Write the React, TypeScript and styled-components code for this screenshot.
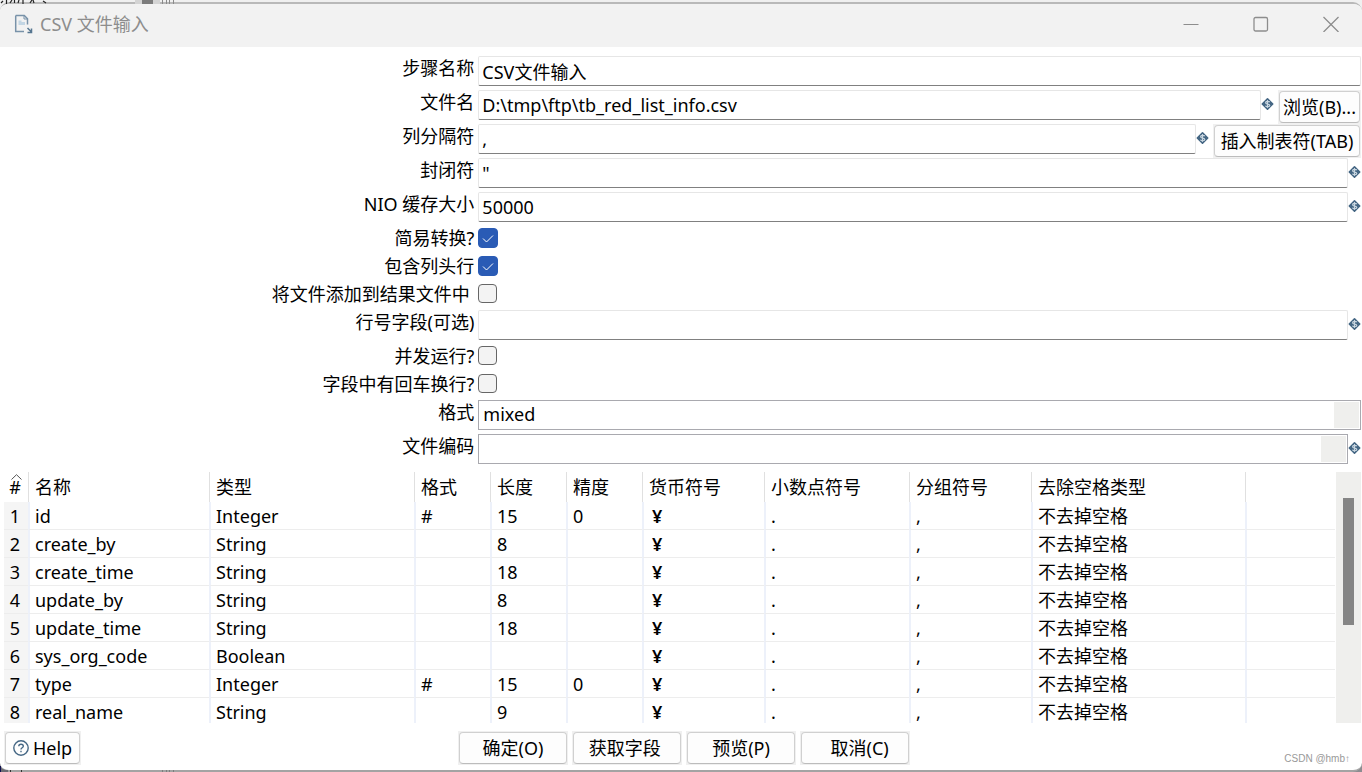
import React from "react";
import styled, { createGlobalStyle } from "styled-components";

const GlobalStyle = createGlobalStyle`
  * { box-sizing: border-box; }
  body {
    margin: 0;
    background: #e9e9e9;
    color: #000;
    font: 18px/26px "Noto Sans", "Noto Sans CJK SC", sans-serif;
  }
  button, input, select { font: inherit; color: inherit; }
`;

const Backdrop = styled.div`
  position: relative;
  height: 100vh;
  min-height: 640px;
  padding-top: 2px;
  background: linear-gradient(#f0f0f0, #f0f0f0 50%, #8c8c90);
`;

const BehindTop = styled.svg`
  position: absolute;
  top: 0;
  left: 0;
`;

const BehindBottom = styled.svg`
  position: absolute;
  bottom: 0;
  left: 0;
`;

const Dialog = styled.main`
  display: flex;
  flex-direction: column;
  height: 100%;
  overflow: hidden;
  background: #fff;
  border-top: 2px solid #b9b9b9;
  border-bottom: 2px solid #a3a3a3;
  border-radius: 9px;
`;

const TitleBar = styled.header`
  display: flex;
  align-items: center;
  flex: none;
  height: 43px;
  padding: 0 0 3px 14px;
  background: #f2f2f2;
  color: #8d8d8d;
`;

const Title = styled.h1`
  flex: 1;
  margin: 0 0 0 6px;
  font-size: 18px;
  font-weight: 400;
`;

const WindowButton = styled.button`
  display: grid;
  place-items: center;
  width: 70px;
  height: 40px;
  padding: 0;
  border: 0;
  background: none;
  color: #8d8d8d;
  &:last-child { width: 66px; padding-left: 4px; }
`;

const Form = styled.form`
  flex: none;
  padding: 9px 1px 4px 0;
`;

const Row = styled.div<{ $compact?: boolean }>`
  display: flex;
  align-items: flex-start;
  height: ${(p) => (p.$compact ? 28 : 34)}px;
`;

const Label = styled.label`
  flex: none;
  width: 35%;
  padding-right: 2px;
  line-height: 24px;
  text-align: right;
  white-space: pre;
`;

const Field = styled.div`
  display: flex;
  flex: 1;
  min-width: 0;
  margin-left: 2px;
`;

const TextInput = styled.input`
  flex: 1;
  min-width: 0;
  height: 30px;
  padding: 0 3px;
  border: 1px solid #e6e6e6;
  border-bottom-color: #808080;
  border-radius: 2px;
  background: #fff;
  outline: 0;
`;

const Select = styled.select`
  appearance: none;
  flex: 1;
  min-width: 0;
  height: 30px;
  padding: 0 4px 2px;
  border: 1px solid #a9a9af;
  border-radius: 0;
  background: linear-gradient(#efefed, #efefed) no-repeat right 1px top 1px / 25px 26px #fff;
  outline: 0;
`;

const CheckBox = styled.span`
  display: grid;
  justify-items: start;
  margin-top: 2px;
  > * { grid-area: 1 / 1; }
`;

const CheckInput = styled.input`
  appearance: none;
  width: 19px;
  height: 19px;
  margin: 0;
  border: 1px solid #666;
  border-radius: 4px;
  background: #f3f3f3;
  &:checked {
    width: 20px;
    height: 20px;
    border-color: #2a5bb5;
    background: #2a5bb5;
  }
`;

const Tick = styled.svg`
  pointer-events: none;
`;

const VariableMark = styled.svg`
  flex: none;
  margin-top: 7px;
`;

const ButtonFrame = styled.span<{ $width: number; $after?: boolean }>`
  display: inline-flex;
  flex: none;
  height: 34px;
  width: ${(p) => p.$width}px;
  margin-left: ${(p) => (p.$after ? 4 : 0)}px;
  padding: 1px;
  background: #f0f0f0;
`;

const Button = styled.button`
  display: flex;
  align-items: center;
  justify-content: center;
  flex: 1;
  gap: 4px;
  padding: 0;
  border: 1px solid #d0d0d0;
  border-bottom-color: #bcbcbc;
  border-radius: 4px;
  background: #fdfdfd;
  white-space: pre;
`;

const TableArea = styled.section`
  display: flex;
  flex: 1;
  min-height: 0;
  padding: 0 1px 0 4px;
`;

const TableView = styled.div`
  flex: 1;
  min-width: 0;
  overflow: hidden;
`;

const Table = styled.table`
  width: 100%;
  table-layout: fixed;
  border-spacing: 0;
`;

const Col = styled.col<{ $w?: number }>`
  width: ${(p) => (p.$w ? `${p.$w}px` : "auto")};
`;

const HeadCell = styled.th`
  height: 30px;
  padding: 0 0 0 6px;
  border-left: 1px solid #e0e0e0;
  font-weight: 400;
  text-align: left;
  white-space: nowrap;
  &:first-child { padding: 0 2px 0 0; border: 0; text-align: center; }
`;

const SortMark = styled.svg`
  display: block;
  margin: 0 0 -6px 7px;
`;

const Cell = styled.td`
  height: 28px;
  padding: 0 0 0 5px;
  border-left: 2px solid #edf1fa;
  border-bottom: 1px solid #ededed;
  white-space: nowrap;
  &:first-child {
    padding: 0 2px 0 0;
    border-left: 0;
    background: #f5f5f5;
    text-align: center;
  }
`;

const CurrencyCell = styled(Cell)`
  padding-left: 8px;
  font-weight: 600;
`;

const ScrollTrack = styled.div`
  flex: none;
  width: 25px;
  margin-left: 1px;
  padding: 26px 7px 0;
  background: #efefed;
`;

const ScrollThumb = styled.div`
  height: 127px;
  background: #858585;
`;

const Footer = styled.footer`
  display: grid;
  grid-template-columns: 1fr auto 1fr;
  flex: none;
  padding: 8px 0 5px 4px;
`;

const Actions = styled.div`
  display: flex;
  gap: 4px;
  padding-left: 2px;
`;

const Watermark = styled.small`
  align-self: end;
  justify-self: end;
  margin-right: 12px;
  color: #999;
  font: 10px/12px "Liberation Sans", "Noto Sans CJK SC", sans-serif;
`;

const Variable = () => (
  <VariableMark width="13" height="14" viewBox="0 0 13 14" aria-hidden="true">
    <path d="M6.500 1.800 11.700 7 6.500 12.200 1.300 7Z" fill="#456784" stroke="#456784" strokeWidth="1.600" strokeLinejoin="round" />
    <path d="M8.800 5.200C8 4 4.600 4 4.600 5.700c0 1.700 4.200 1 4.200 2.800 0 1.700-3.600 1.600-4.400.3M6.500 3v8" fill="none" stroke="#c9d6e0" strokeWidth="1.200" />
  </VariableMark>
);

type TextRowProps = {
  id: string;
  label: string;
  value: string;
  variable?: boolean;
  action?: string;
  actionWidth?: number;
};

const TextRow = ({ id, label, value, variable, action, actionWidth = 110 }: TextRowProps) => (
  <Row>
    <Label htmlFor={id}>{label}</Label>
    <Field>
      <TextInput id={id} defaultValue={value} />
      {variable && <Variable />}
      {action && (
        <ButtonFrame $width={actionWidth} $after>
          <Button type="button">{action}</Button>
        </ButtonFrame>
      )}
    </Field>
  </Row>
);

const CheckRow = ({ id, label, checked }: { id: string; label: string; checked?: boolean }) => (
  <Row $compact>
    <Label htmlFor={id}>{label}</Label>
    <Field>
      <CheckBox>
        <CheckInput type="checkbox" id={id} defaultChecked={checked} />
        {checked && (
          <Tick width="20" height="20" viewBox="0 0 20 20" aria-hidden="true">
            <path d="M5 10.5 8.5 14 15 7.5" fill="none" stroke="#fff" strokeWidth="1" />
          </Tick>
        )}
      </CheckBox>
    </Field>
  </Row>
);

const SelectRow = ({ id, label, value, variable }: TextRowProps) => (
  <Row>
    <Label htmlFor={id}>{label}</Label>
    <Field>
      <Select id={id} defaultValue={value}>
        <option>{value}</option>
      </Select>
      {variable && <Variable />}
    </Field>
  </Row>
);

const widths = [24, 181, 205, 76, 76, 76, 122, 145, 122, 214, 0];
const headings = ["名称", "类型", "格式", "长度", "精度", "货币符号", "小数点符号", "分组符号", "去除空格类型", ""];
const fields = [
  ["id", "Integer", "#", "15", "0"],
  ["create_by", "String", "", "8", ""],
  ["create_time", "String", "", "18", ""],
  ["update_by", "String", "", "8", ""],
  ["update_time", "String", "", "18", ""],
  ["sys_org_code", "Boolean", "", "", ""],
  ["type", "Integer", "#", "15", "0"],
  ["real_name", "String", "", "9", ""],
];
const actions = ["确定(O)", "获取字段 ", "预览(P)", "  取消(C)"];

export default function App() {
  return (
    <Backdrop>
      <GlobalStyle />
      <Dialog>
        <TitleBar>
          <svg width="20" height="20" viewBox="0 0 20 20" fill="none" aria-hidden="true">
            <path d="M1.700 1.500h8.600l3.200 3.200v5.800M10 17.500H1.700v-16" stroke="#7892a9" strokeWidth="1.500" />
            <path d="M10 1.500v3.500h3.500" stroke="#7892a9" />
            <path d="M4.500 6.500h3v1.500h3.500v3h-6.500z" fill="#c3d6e4" />
            <path d="m13.500 14 4 4M17.500 14.500v4h-4" stroke="#567690" strokeWidth="1.500" />
          </svg>
          <Title>CSV 文件输入</Title>
          <WindowButton aria-label="最小化">
            <svg width="16" height="16" viewBox="0 0 16 16"><path d="M.5 8.500h15" stroke="currentColor" /></svg>
          </WindowButton>
          <WindowButton aria-label="最大化">
            <svg width="16" height="16" viewBox="0 0 16 16"><rect x="1" y="1.500" width="13.500" height="13.500" rx="1.500" fill="none" stroke="currentColor" strokeWidth="1.300" /></svg>
          </WindowButton>
          <WindowButton aria-label="关闭">
            <svg width="16" height="16" viewBox="0 0 16 16"><path d="m.5 1 15 15M15.500 1l-15 15" stroke="currentColor" strokeWidth="1.300" /></svg>
          </WindowButton>
        </TitleBar>

        <Form>
          <TextRow id="step" label="步骤名称" value="CSV文件输入" />
          <TextRow id="file" label="文件名" value="D:\tmp\ftp\tb_red_list_info.csv" variable action="浏览(B)..." actionWidth={83} />
          <TextRow id="delimiter" label="列分隔符" value="," variable action="插入制表符(TAB)" actionWidth={148} />
          <TextRow id="enclosure" label="封闭符" value={'"'} variable />
          <TextRow id="buffer" label="NIO 缓存大小" value="50000" variable />
          <CheckRow id="lazy" label="简易转换?" checked />
          <CheckRow id="header" label="包含列头行" checked />
          <CheckRow id="result" label="将文件添加到结果文件中 " />
          <TextRow id="rownum" label="行号字段(可选)" value="" variable />
          <CheckRow id="parallel" label="并发运行?" />
          <CheckRow id="newline" label="字段中有回车换行?" />
          <SelectRow id="format" label="格式" value="mixed" />
          <SelectRow id="encoding" label="文件编码" value="" variable />
        </Form>

        <TableArea>
          <TableView>
            <Table>
              <colgroup>
                {widths.map((w, i) => <Col key={i} $w={w} />)}
              </colgroup>
              <thead>
                <tr>
                  <HeadCell>
                    <SortMark width="11" height="6" viewBox="0 0 11 6" aria-hidden="true">
                      <path d="M.5 5.500 5.500 .7l5 4.800" fill="none" stroke="#555" />
                    </SortMark>
                    #
                  </HeadCell>
                  {headings.map((h, i) => <HeadCell key={i}>{h}</HeadCell>)}
                </tr>
              </thead>
              <tbody>
                {fields.map((f, i) => (
                  <tr key={f[0]}>
                    {[String(i + 1), ...f].map((v, j) => <Cell key={j}>{v}</Cell>)}
                    <CurrencyCell>¥</CurrencyCell>
                    <Cell>.</Cell>
                    <Cell>,</Cell>
                    <Cell>不去掉空格</Cell>
                    <Cell />
                  </tr>
                ))}
              </tbody>
            </Table>
          </TableView>
          <ScrollTrack>
            <ScrollThumb />
          </ScrollTrack>
        </TableArea>

        <Footer>
          <div>
            <ButtonFrame $width={77}>
              <Button type="button">
                <svg width="16" height="16" viewBox="0 0 16 16" fill="none" stroke="#456784" aria-hidden="true">
                  <circle cx="8" cy="8" r="7.200" strokeWidth="1.400" />
                  <path d="M5.800 6.300C5.800 3.500 10.300 3.600 10.300 6.200 10.300 7.800 8 7.700 8 9.500M8 10.800v1.400" strokeWidth="1.400" />
                </svg>
                Help
              </Button>
            </ButtonFrame>
          </div>
          <Actions>
            {actions.map((a) => (
              <ButtonFrame key={a} $width={110}>
                <Button type="button">{a}</Button>
              </ButtonFrame>
            ))}
          </Actions>
          <Watermark>CSDN @hmb↑</Watermark>
        </Footer>
      </Dialog>
      <BehindTop width="180" height="4" viewBox="0 0 180 4" aria-hidden="true">
        <path d="M135 0h7v4h-7zM153 0h7v4h-7z" fill="#d4d4d4" />
        <path d="M142 0h11v4h-11z" fill="#7c7c7c" />
        <path d="M162.500 0v4M166.500 0v4M169.500 0v4M173.500 0v4" stroke="#8a8a8a" />
        <path d="M1 3 3 1M6.500 0v4M10 3l2-3M14.500 0v3M18 3l1-3M23 0v4M30 3l2-3M34 3l-1-3M43 1l3 2" stroke="#222" strokeWidth="1.200" />
      </BehindTop>
      <BehindBottom width="180" height="8" viewBox="0 0 180 8" aria-hidden="true">
        <path d="M0 1C1 4 3 6 8 6v2H0z" fill="#6c6c74" />
        <path d="M.5 2v6" stroke="#101050" />
        <path d="M10.500 6v2M21.500 6v2" stroke="#333" />
        <path d="M162.500 6v2M166.500 6v2M169.500 6v2M173.500 6v2" stroke="#7d7d7d" />
      </BehindBottom>
    </Backdrop>
  );
}
